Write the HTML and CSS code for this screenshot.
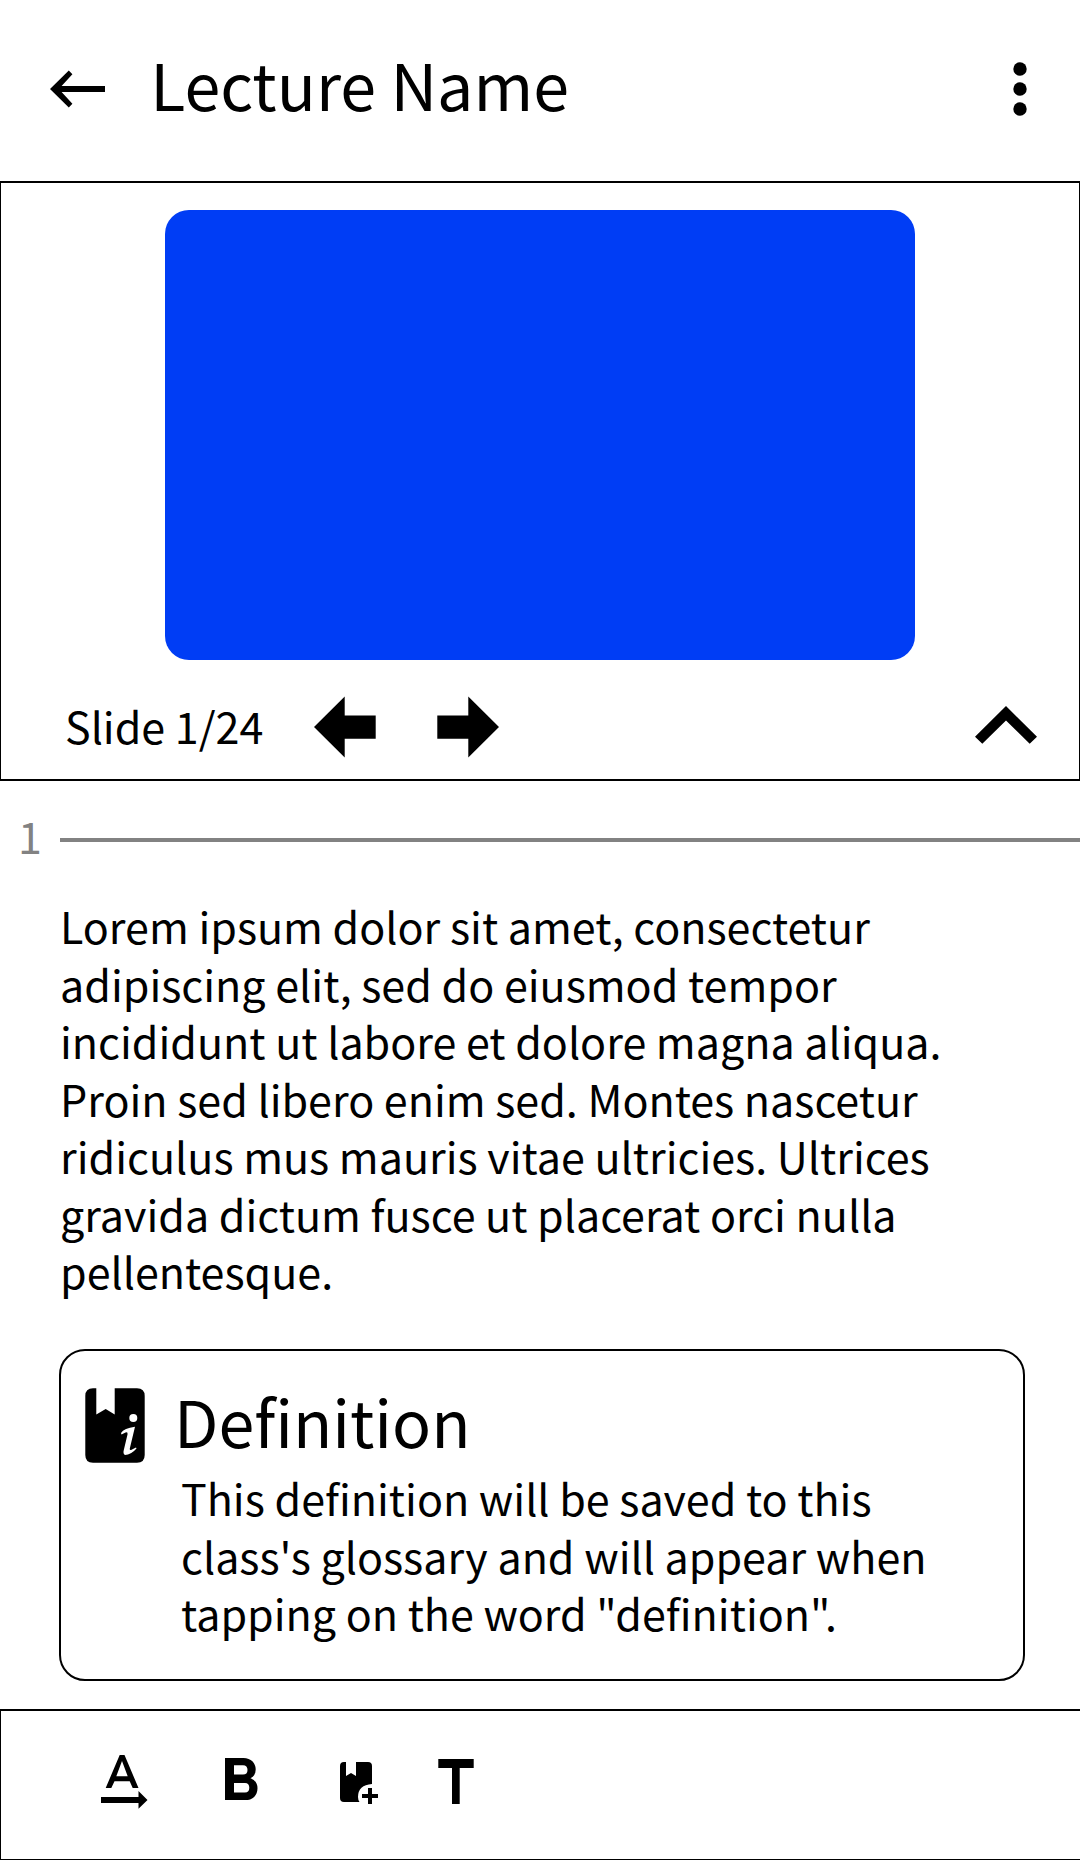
FILE: index.html
```html
<!DOCTYPE html>
<html lang="en">
<head>
<meta charset="utf-8">
<title>Lecture Name</title>
<link rel="stylesheet" href="styles.css">
</head>
<body>
<div class="app">
  <header class="topbar">
    <svg class="back" viewBox="0 0 56 38" width="56" height="38"><path d="M0 19 18.800.6l3.600 3.700L11.600 16H55v6H11.600l10.800 11.700-3.600 3.700z"/></svg>
    <h1 class="title">Lecture Name</h1>
    <svg class="more" viewBox="0 0 14 54" width="14" height="54"><circle cx="7" cy="7" r="6.700"/><circle cx="7" cy="27" r="6.700"/><circle cx="7" cy="47" r="6.700"/></svg>
  </header>

  <section class="viewer">
    <div class="slide"></div>
    <div class="controls">
      <span class="counter">Slide 1/24</span>
      <svg class="prev" viewBox="0 0 62 62" width="62" height="62"><path d="M0 31 30.700.5V19.500H61.700V42.800H30.700V61.500z"/></svg>
      <svg class="next" viewBox="0 0 62 62" width="62" height="62"><path d="M62 31 31.300.5V19.500H.3V42.800H31.300V61.500z"/></svg>
      <svg class="collapse" viewBox="0 0 62 38" width="62" height="38"><path d="M31 0 62 30.700 54.700 37.700 31 14.500 7.300 37.700 0 30.700z"/></svg>
    </div>
  </section>

  <main class="notes">
    <div class="divider"><span class="page">1</span><span class="rule"></span></div>
    <p class="text">Lorem ipsum dolor sit amet, consectetur<br>adipiscing elit, sed do eiusmod tempor<br>incididunt ut labore et dolore magna aliqua.<br>Proin sed libero enim sed. Montes nascetur<br>ridiculus mus mauris vitae ultricies. Ultrices<br>gravida dictum fusce ut placerat orci nulla<br>pellentesque.</p>
    <article class="card">
      <svg class="book" viewBox="0 0 60 75" width="60" height="75"><path d="M8 .3H11.300V26.500L20.700 21 29.700 26.500V.3H52q7.700 0 7.700 7.700V67q0 7.700-7.700 7.700H8Q.3 74.700.3 67V8Q.3.3 8 .3z"/><circle class="knock" cx="48.300" cy="30" r="4"/><path class="knock" d="M36 45Q39 40 50 38.700L44.800 60.500Q44.500 63 47 61.500L51 59.500 51.500 60.600Q46 67 40 67 37.800 66 38.800 62L42.500 46.500Q43 43.500 40.500 44.500L36.500 46.500z"/></svg>
      <div class="entry">
        <h2 class="term">Definition</h2>
        <p class="meaning">This definition will be saved to this<br>class's glossary and will appear when<br>tapping on the word "definition".</p>
      </div>
    </article>
  </main>

  <footer class="toolbar">
    <svg class="tool" viewBox="0 0 47 54" width="47" height="54"><path fill-rule="evenodd" d="M18.700 0H23.500L37.500 33H31.700L28.700 26.200H13.500L10.300 33H4.700zM21 6 15.300 21.300H26.700zM0 42H37.500V36L46.500 45 37.500 53.700V48H0z"/></svg>
    <svg class="tool bold" viewBox="0 0 33 42" width="33" height="42"><path fill-rule="evenodd" d="M0 0H18.500C26 0 30.700 5 30.700 11.500Q30.700 17.500 25.500 20.300 32.500 23 32.500 30.300C32.500 37 28 42 21 42H0zM9 7.300V16.500H18Q22.500 16.500 22.500 12T18 7.300zM9 25V34.500H20Q24.300 34.500 24.300 29.800T20 25z"/></svg>
    <svg class="tool add" viewBox="0 0 38 42" width="38" height="42"><path d="M4 0H6V14L11 11 16 14V0H28Q32 0 32 4V22Q18 23 18 35 18 38 19.500 40H4Q0 40 0 36V4Q0 0 4 0zM28 26H32V32H38V36H32V42H28V36H22V32H28z"/></svg>
    <svg class="tool type" viewBox="0 0 36 45" width="36" height="45"><path d="M.3 0H35.700V9H21.700V45H14V9H.3z"/></svg>
  </footer>
</div>
</body>
</html>
```
FILE: styles.css
```css
* { box-sizing: border-box; margin: 0; padding: 0; }

body {
  width: 1080px;
  background: #fff;
  color: #000;
  font-family: "Noto Sans CJK SC", "Noto Sans", sans-serif;
  font-size: 43.02px;
  line-height: 57.5px;
}

svg { display: block; flex: none; }

.app { display: flex; flex-direction: column; height: 1860px; overflow: hidden; }

.topbar { display: flex; align-items: center; height: 181px; padding: 0 53px 3px 49.600px; }
.title { margin: -12px 0 0 44.600px; font-size: 64.550px; font-weight: 400; line-height: 90px; }
.more { margin-left: auto; }

.viewer { height: 600px; padding-top: 27px; border: solid #000; border-width: 2px 1px; }
.slide { width: 750px; height: 450px; margin: 0 auto; border-radius: 24px; background: #003df5; }
.controls { display: flex; align-items: center; height: 131px; padding: 0 42px 0 64px; }
.counter { width: 249px; }
.prev { margin-top: 2px; }
.next { margin: 2px 0 0 61px; }
.collapse { margin: -1px 0 0 auto; }

.notes { height: 928px; }
.divider { display: flex; align-items: center; height: 118px; padding-left: 18px; color: #828282; }
.page { width: 42px; margin-top: -9px; }
.rule { flex: 1; height: 4px; background: #828282; }
.text { margin-top: -2px; padding-left: 60px; }

.card { display: flex; width: 966px; height: 332px; margin: 49.500px 0 0 59px; padding: 37px 23px 0 23.600px; border: 2px solid #000; border-radius: 26px; }
.knock { fill: #fff; }
.entry { padding-left: 29.400px; }
.term { margin-top: -6px; font-size: 64.550px; font-weight: 400; line-height: 76px; }
.meaning { margin-top: 11px; padding-left: 7px; }

.toolbar { display: flex; align-items: flex-start; height: 151px; padding: 44px 0 0 100px; border: solid #000; border-width: 2px 0 1px 1px; }
.bold { margin: 3px 0 0 77px; }
.add { margin: 7px 0 0 82px; }
.type { margin: 4px 0 0 60px; }
```
